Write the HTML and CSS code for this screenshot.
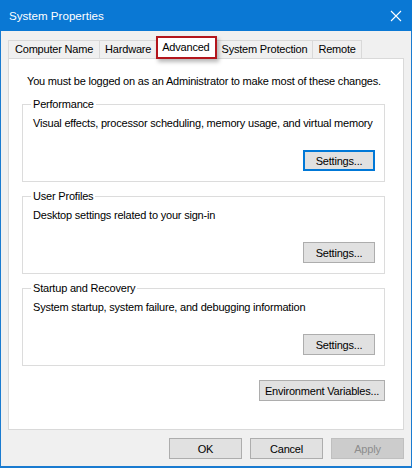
FILE: index.html
```html
<!DOCTYPE html>
<html lang="en">
<head>
<meta charset="utf-8">
<title>System Properties</title>
<link rel="stylesheet" href="styles.css">
</head>
<body>
<div class="window">
  <div class="titlebar">
    <span class="title">System Properties</span>
    <svg class="close" width="12" height="12" viewBox="0 0 12 12" aria-hidden="true">
      <path d="M1 1 L11 11 M11 1 L1 11" stroke="#ffffff" stroke-width="1.1" fill="none"/>
    </svg>
  </div>
  <div class="content">
    <div class="tabs">
      <div class="tab tab-first">Computer Name</div>
      <div class="tab">Hardware</div>
      <div class="tab tab-selected"><span class="mark"></span>Advanced</div>
      <div class="tab">System Protection</div>
      <div class="tab">Remote</div>
    </div>
    <div class="panel">
      <p class="note">You must be logged on as an Administrator to make most of these changes.</p>
      <fieldset class="group">
        <legend>Performance</legend>
        <p class="desc">Visual effects, processor scheduling, memory usage, and virtual memory</p>
        <div class="group-actions"><button class="btn btn-focus">Settings...</button></div>
      </fieldset>
      <fieldset class="group">
        <legend>User Profiles</legend>
        <p class="desc">Desktop settings related to your sign-in</p>
        <div class="group-actions"><button class="btn">Settings...</button></div>
      </fieldset>
      <fieldset class="group">
        <legend>Startup and Recovery</legend>
        <p class="desc">System startup, system failure, and debugging information</p>
        <div class="group-actions"><button class="btn">Settings...</button></div>
      </fieldset>
      <div class="env-row"><button class="btn btn-env">Environment Variables...</button></div>
    </div>
    <div class="footer">
      <button class="btn btn-dlg">OK</button>
      <button class="btn btn-dlg">Cancel</button>
      <button class="btn btn-dlg btn-disabled">Apply</button>
    </div>
  </div>
</div>
</body>
</html>
```
FILE: styles.css
```css
* { box-sizing: border-box; }
html, body { margin: 0; padding: 0; }
body {
  font-family: "Liberation Sans", Arial, sans-serif;
  font-size: 11px;
  letter-spacing: -0.2px;
  color: #000;
  background: #ffffff;
}
.window {
  width: 412px;
  height: 468px;
  background: #f0f0f0;
  border: 1px solid #1a7bd0;
  border-top: none;
  border-bottom-width: 2px;
  display: flex;
  flex-direction: column;
}
.titlebar {
  height: 31px;
  background: #0a78d4;
  margin: 0 -1px;
  display: flex;
  align-items: center;
  justify-content: space-between;
  padding: 0 9px 0 9px;
  color: #fff;
  flex: none;
}
.title {
  font-size: 11.6px;
  letter-spacing: 0;
  line-height: 15px;
  padding-bottom: 1px;
}
.close { display: block; margin-right: 1px; }
.content {
  flex: 1;
  padding: 6px 7px 0 7px;
  display: flex;
  flex-direction: column;
}
.tabs {
  display: flex;
  align-items: flex-end;
  height: 21px;
  position: relative;
  z-index: 1;
}
.tab {
  height: 18px;
  line-height: 17px;
  padding: 0 5px;
  border: 1px solid #d9d9d9;
  border-bottom: none;
  border-left: none;
  background: #f0f0f0;
  white-space: nowrap;
}
.tab-first {
  border-left: 1px solid #d9d9d9;
  padding: 0 6px;
}
.tab-selected {
  position: relative;
  height: 22px;
  margin-bottom: -1px;
  background: #ffffff;
  line-height: 19px;
  padding: 0 6px 0 5px;
}
.mark {
  position: absolute;
  left: -1px;
  right: -1px;
  top: -2px;
  bottom: 0;
  border: 2px solid #b3151c;
  box-shadow: 2px 3px 4px rgba(0, 0, 0, 0.28);
  pointer-events: none;
}
.panel {
  height: 372px;
  background: #ffffff;
  border: 1px solid #d9d9d9;
  padding: 15px 18px 0 13px;
  display: flex;
  flex-direction: column;
}
.note {
  margin: 0 0 0 5px;
  line-height: 15px;
  white-space: nowrap;
}
.group {
  margin: 8px 0 0 0;
  padding: 0 9px 10px 9px;
  border: 1px solid #dcdcdc;
  min-width: 0;
}
.group + .group { margin-top: 7px; }
.group legend {
  padding: 0 2px;
  margin-left: -1px;
  line-height: 14px;
}
.desc {
  margin: 5px 0 0 1px;
  line-height: 15px;
  white-space: nowrap;
}
.group-actions {
  display: flex;
  justify-content: flex-end;
  margin-top: 19px;
}
.btn {
  font-family: inherit;
  font-size: 11px;
  letter-spacing: -0.2px;
  color: #000;
  background: #e1e1e1;
  border: 1px solid #adadad;
  height: 21px;
  padding: 0 4px;
  margin: 0;
  line-height: 18px;
  white-space: nowrap;
}
.group .btn { width: 72px; }
.btn-focus { border: 2px solid #0078d7; }
.env-row {
  display: flex;
  justify-content: flex-end;
  margin-top: 14px;
}
.btn-env { width: 126px; }
.footer {
  display: flex;
  justify-content: flex-end;
  gap: 8px;
  margin-top: 8px;
}
.btn-dlg { width: 73px; }
.btn-disabled {
  background: #cccccc;
  border-color: #bfbfbf;
  color: #8d8d8d;
}
```
